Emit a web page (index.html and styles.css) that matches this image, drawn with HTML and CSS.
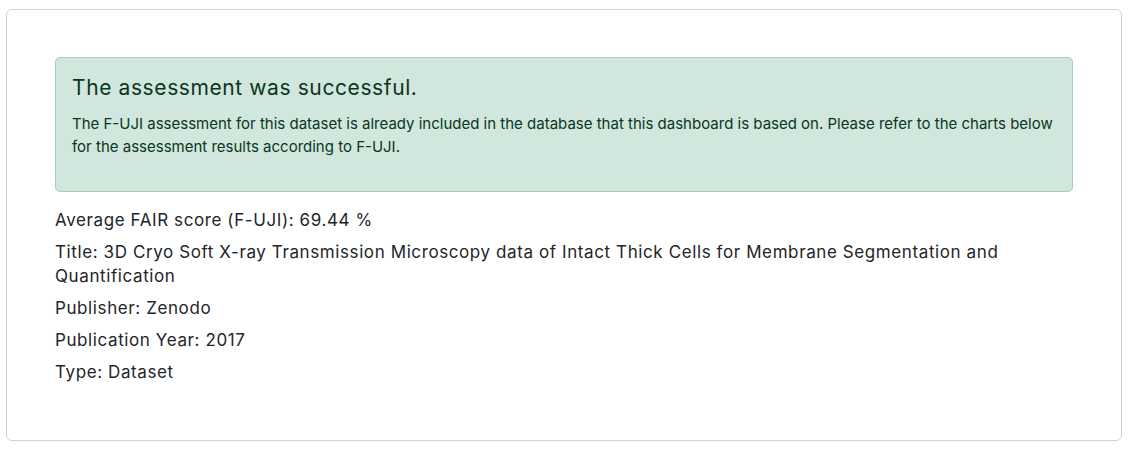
FILE: index.html
```html
<!DOCTYPE html>
<html lang="en">
<head>
<meta charset="utf-8">
<title>Assessment</title>
<link rel="stylesheet" href="styles.css">
</head>
<body>
<div class="page">
  <div class="card">
    <div class="alert">
      <h4 class="alert-heading">The assessment was successful.</h4>
      <p class="alert-text">The F-UJI assessment for this dataset is already included in the database that this dashboard is based on. Please refer to the charts below for the assessment results according to F-UJI.</p>
    </div>
    <p class="info">Average FAIR score (F-UJI): 69.44 %</p>
    <p class="info">Title: 3D Cryo Soft X-ray Transmission Microscopy data of Intact Thick Cells for Membrane Segmentation and Quantification</p>
    <p class="info">Publisher: Zenodo</p>
    <p class="info">Publication Year: 2017</p>
    <p class="info">Type: Dataset</p>
  </div>
</div>
</body>
</html>
```
FILE: styles.css
```css
html, body {
  margin: 0;
  padding: 0;
  background: #ffffff;
}
body {
  font-family: Inter, "Noto Sans", sans-serif;
  color: #212529;
  font-size: 17px;
  line-height: 24px;
}
.page {
  padding: 9px 10px 0 6px;
}
.card {
  border: 1px solid #d3d3d3;
  border-radius: 6px;
  padding: 47px 48px 48px 48px;
}
.alert {
  background: #d1e7dd;
  border: 1px solid #a3cfbb;
  border-radius: 5px;
  color: #0a3622;
  padding: 17px 16px 16px 16px;
  margin-bottom: 16px;
}
.alert-heading {
  margin: 0 0 11px 0;
  font-size: 21px;
  font-weight: 400;
  line-height: 26px;
  letter-spacing: 0.6px;
}
.alert-text {
  margin: 0 0 17px 0;
  font-size: 15px;
  line-height: 23px;
}
.info {
  margin: 0 0 8px 0;
  font-size: 17px;
  line-height: 24px;
  letter-spacing: 0.6px;
}
```
